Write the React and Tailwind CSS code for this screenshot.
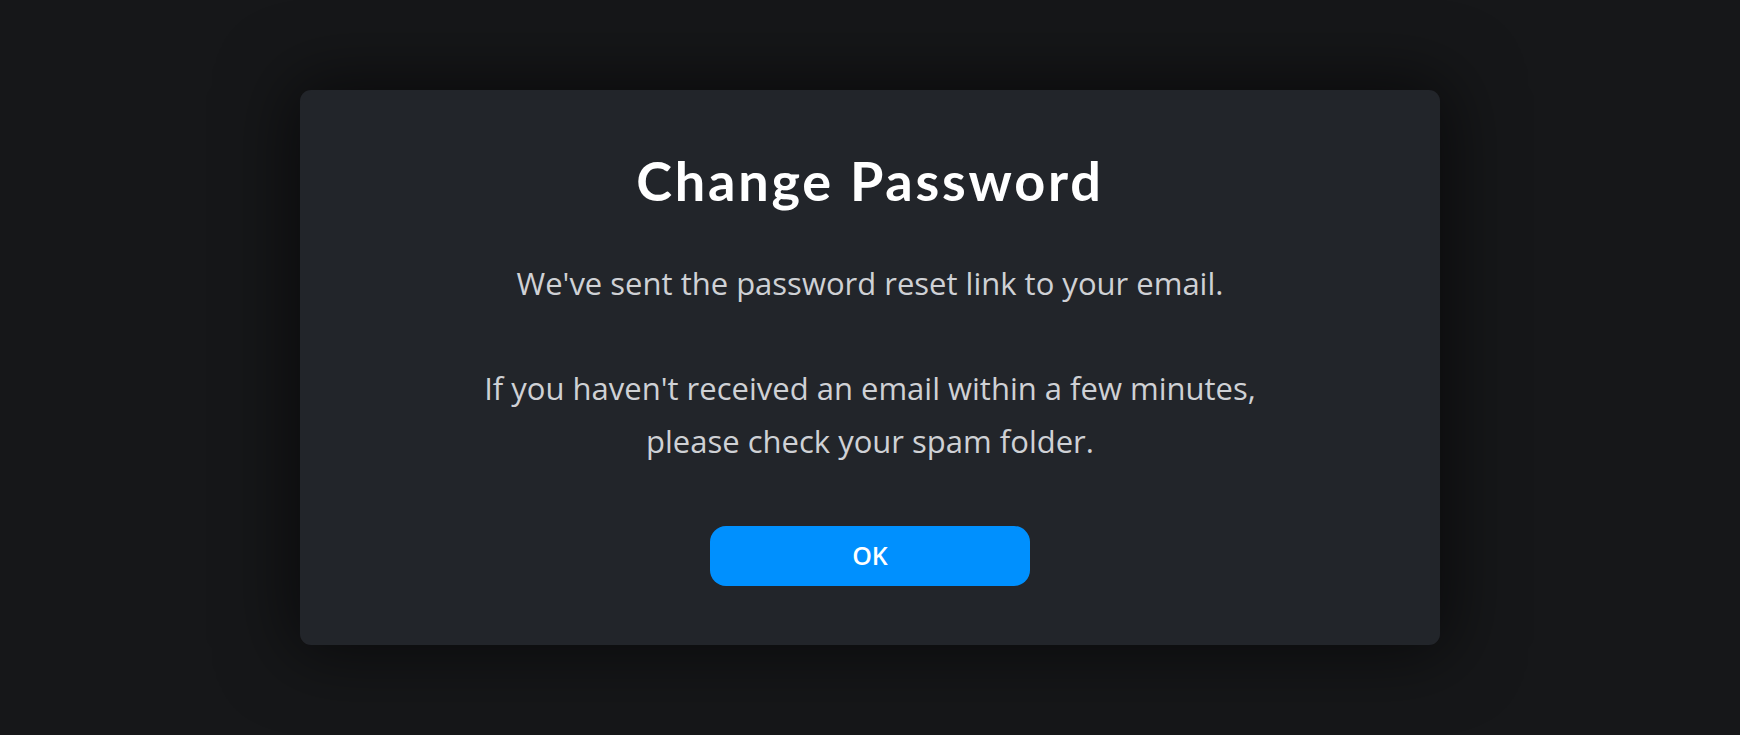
export default function App() {
  return (
    <div className="h-screen w-full bg-[#161719] flex items-center justify-center">
      <div className="w-[1140px] h-[555px] rounded-[11px] bg-[#22252a] shadow-[0_0_70px_10px_rgba(0,0,0,0.55)] flex flex-col items-center pt-[59px]">
        <h1 className="text-[54px] leading-[64px] font-bold text-white font-['Lato',sans-serif] tracking-[2.8px]">
          Change Password
        </h1>
        <div className="mt-[44px] text-[31px] leading-[52.5px] text-[#cfd1d5] font-['Open_Sans',sans-serif] font-normal text-center">
          <p>We've sent the password reset link to your email.</p>
          <p className="mt-[52.5px]">
            If you haven't received an email within a few minutes,
            <br />
            please check your spam folder.
          </p>
        </div>
        <button className="mt-[59px] w-[320px] h-[60px] rounded-[16px] bg-[#0090fe] text-white text-[25px] font-semibold font-['Open_Sans',sans-serif]">
          OK
        </button>
      </div>
    </div>
  );
}
